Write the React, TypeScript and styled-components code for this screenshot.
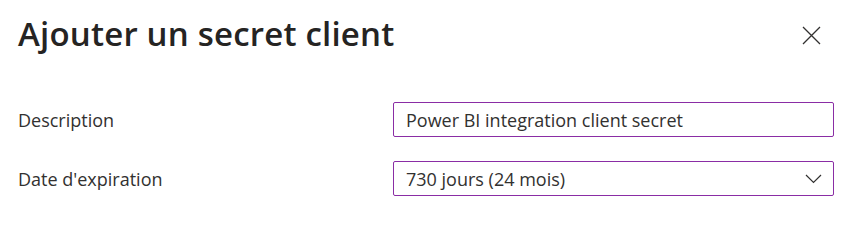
import React from "react";
import styled, { createGlobalStyle } from "styled-components";

const GlobalStyle = createGlobalStyle`
  body {
    margin: 0;
    background: #fff;
    font-family: "Open Sans", "Noto Sans", sans-serif;
    color: #323130;
  }
`;

const Panel = styled.div`
  width: 849px;
  height: 233px;
  box-sizing: border-box;
  padding: 10px 15px 0 18px;
`;

const Header = styled.div`
  display: flex;
  align-items: flex-start;
  justify-content: space-between;
  height: 92px;
`;

const Title = styled.h1`
  margin: 0;
  font-size: 33px;
  font-weight: 600;
  line-height: 48px;
  color: #252423;
  letter-spacing: 0.2px;
`;

const CloseButton = styled.button`
  border: none;
  background: none;
  padding: 0;
  margin: 15px 13px 0 0;
  width: 20px;
  height: 20px;
  display: flex;
  align-items: center;
  justify-content: center;
  cursor: pointer;
`;

const Form = styled.div`
  display: grid;
  grid-template-columns: 375px 1fr;
  row-gap: 24px;
  align-items: center;
`;

const Label = styled.label`
  font-size: 18px;
  color: #323130;
`;

const Field = styled.div`
  height: 35px;
  box-sizing: border-box;
  border: 1px solid #8a2da5;
  border-radius: 2px;
  display: flex;
  align-items: center;
  justify-content: space-between;
  padding: 0 11px 0 12px;
  font-size: 18px;
  color: #323130;
`;

function Chevron() {
  return (
    <svg width="17" height="10" viewBox="0 0 17 10" fill="none">
      <path d="M1 1 L8.5 8.5 L16 1" stroke="#323130" strokeWidth="1.2" />
    </svg>
  );
}

function CloseIcon() {
  return (
    <svg width="19" height="19" viewBox="0 0 19 19" fill="none">
      <path d="M1 1 L18 18 M18 1 L1 18" stroke="#323130" strokeWidth="1.3" />
    </svg>
  );
}

export default function App() {
  return (
    <>
      <GlobalStyle />
      <Panel>
        <Header>
          <Title>Ajouter un secret client</Title>
          <CloseButton aria-label="Fermer">
            <CloseIcon />
          </CloseButton>
        </Header>
        <Form>
          <Label>Description</Label>
          <Field>Power BI integration client secret</Field>
          <Label>Date d'expiration</Label>
          <Field>
            <span>730 jours (24 mois)</span>
            <Chevron />
          </Field>
        </Form>
      </Panel>
    </>
  );
}
